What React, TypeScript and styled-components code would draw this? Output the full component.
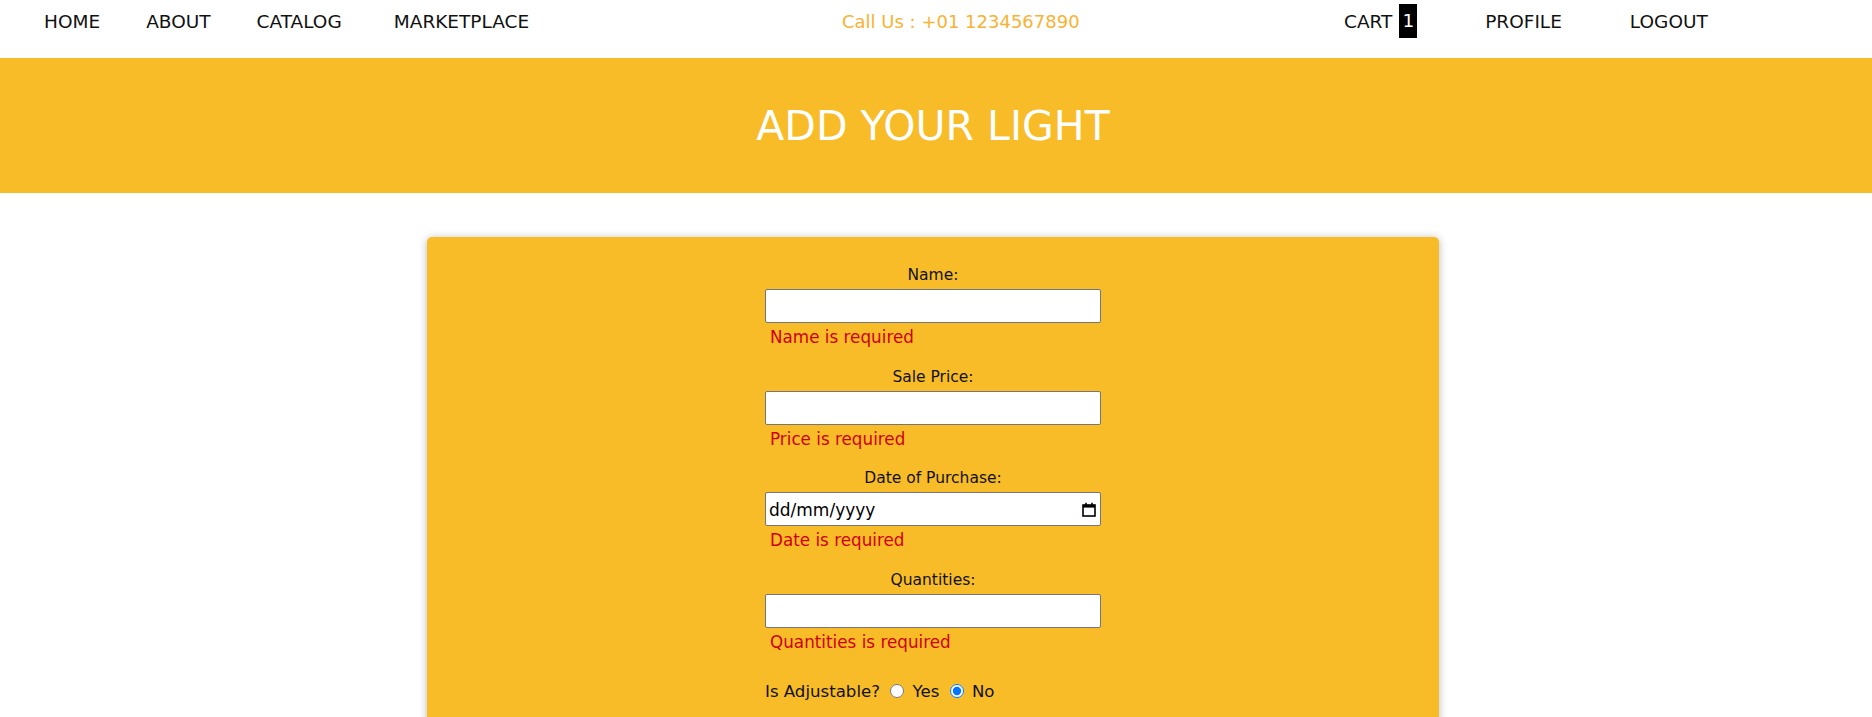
import React from "react";
import styled, { createGlobalStyle } from "styled-components";

const GlobalStyle = createGlobalStyle`
  html, body { margin: 0; padding: 0; overflow: hidden; }
  body {
    font-family: "DejaVu Sans", "Noto Sans", sans-serif;
    background: #ffffff;
    color: #111111;
  }
  * { box-sizing: border-box; }
`;

const YELLOW = "#f8bc28";

const Header = styled.header`
  height: 58px;
  padding: 0 0 16px 44px;
  display: grid;
  grid-template-columns: 798px 502px auto;
  align-items: center;
  background: #ffffff;
`;

const NavGroup = styled.nav<{ $gap: number }>`
  display: flex;
  align-items: center;
  gap: ${(p) => p.$gap}px;
`;

const NavLink = styled.a<{ $extra?: number }>`
  font-size: 18.5px;
  color: #111111;
  text-decoration: none;
  white-space: nowrap;
  display: flex;
  align-items: center;
  margin-right: ${(p) => p.$extra ?? 0}px;
`;

const Phone = styled.div`
  font-size: 18px;
  color: #f9b233;
  white-space: nowrap;
`;

const Badge = styled.span`
  display: inline-block;
  margin-left: 7px;
  background: #000000;
  color: #ffffff;
  padding: 0 3px;
  line-height: 34px;
  font-size: 18.5px;
`;

const Banner = styled.section`
  height: 135px;
  background: ${YELLOW};
  display: flex;
  align-items: center;
  justify-content: center;
  padding-right: 6px;
`;

const Title = styled.h1`
  margin: 0;
  font-size: 41px;
  font-weight: 400;
  color: #ffffff;
`;

const Main = styled.main`
  padding: 44px 6px 0 0;
`;

const Card = styled.div`
  width: 1012px;
  margin: 0 auto;
  background: ${YELLOW};
  border-radius: 5px;
  box-shadow: 0 1px 8px rgba(0, 0, 0, 0.28);
  padding: 29px 0 60px;
  display: flex;
  justify-content: center;
`;

const Form = styled.form`
  width: 336px;
  display: flex;
  flex-direction: column;
`;

const Field = styled.div`
  display: flex;
  flex-direction: column;
  margin-bottom: 20.67px;
`;

const Label = styled.label`
  display: block;
  text-align: center;
  font-size: 15.5px;
  line-height: 18px;
  color: #111111;
  margin-bottom: 5px;
`;

const TextInput = styled.input`
  width: 336px;
  height: 34px;
  border: 1px solid #767676;
  border-radius: 2px;
  background: #ffffff;
  padding: 1px 2px;
  font-family: inherit;
  font-size: 16px;
  outline: none;
`;

const DateBox = styled.div`
  width: 336px;
  height: 34px;
  border: 1px solid #767676;
  border-radius: 2px;
  background: #ffffff;
  padding: 0 4px 0 3px;
  display: flex;
  align-items: center;
  justify-content: space-between;
  font-size: 17px;
  color: #000000;
`;

const DateText = styled.span`
  padding-top: 1px;
`;

const ErrorText = styled.div`
  margin-top: 4px;
  padding-left: 5px;
  font-size: 16.8px;
  line-height: 20px;
  color: #d00000;
`;

const RadioRow = styled.div`
  margin-top: 8px;
  font-size: 16.6px;
  line-height: 20px;
  color: #111111;
  white-space: nowrap;
`;

const Radio = styled.input`
  width: 14px;
  height: 14px;
  margin: 3px 3px 0 5px;
  vertical-align: -1px;
`;

const CalendarIcon = () => (
  <svg width="14" height="15" viewBox="0 0 14 15" aria-hidden="true">
    <rect x="1" y="3" width="12" height="11" fill="none" stroke="#000" strokeWidth="1.6" />
    <rect x="1" y="3" width="12" height="2.6" fill="#000" />
    <rect x="3.2" y="0.8" width="1.6" height="3" fill="#000" />
    <rect x="9.2" y="0.8" width="1.6" height="3" fill="#000" />
  </svg>
);

const fields = [
  { label: "Name:", error: "Name is required", type: "text" },
  { label: "Sale Price:", error: "Price is required", type: "text" },
  { label: "Date of Purchase:", error: "Date is required", type: "date" },
  { label: "Quantities:", error: "Quantities is required", type: "text" },
];

export default function App() {
  return (
    <>
      <GlobalStyle />
      <Header>
        <NavGroup $gap={46}>
          <NavLink href="#">HOME</NavLink>
          <NavLink href="#">ABOUT</NavLink>
          <NavLink href="#" $extra={6}>CATALOG</NavLink>
          <NavLink href="#">MARKETPLACE</NavLink>
        </NavGroup>
        <Phone>Call Us : +01 1234567890</Phone>
        <NavGroup $gap={68}>
          <NavLink href="#">
            CART <Badge>1</Badge>
          </NavLink>
          <NavLink href="#">PROFILE</NavLink>
          <NavLink href="#">LOGOUT</NavLink>
        </NavGroup>
      </Header>
      <Banner>
        <Title>ADD YOUR LIGHT</Title>
      </Banner>
      <Main>
        <Card>
          <Form onSubmit={(e) => e.preventDefault()}>
            {fields.map((f) => (
              <Field key={f.label}>
                <Label>{f.label}</Label>
                {f.type === "date" ? (
                  <DateBox>
                    <DateText>dd/mm/yyyy</DateText>
                    <CalendarIcon />
                  </DateBox>
                ) : (
                  <TextInput type="text" />
                )}
                <ErrorText>{f.error}</ErrorText>
              </Field>
            ))}
            <RadioRow>
              Is Adjustable? <Radio type="radio" name="adj" /> Yes{" "}
              <Radio type="radio" name="adj" defaultChecked /> No
            </RadioRow>
          </Form>
        </Card>
      </Main>
    </>
  );
}
